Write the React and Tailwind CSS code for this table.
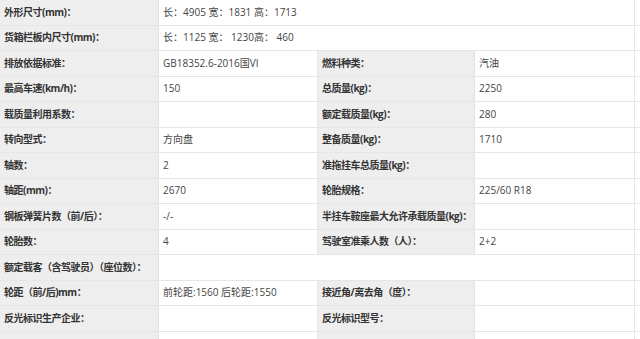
const rows = [
  { l: '外形尺寸(mm)：', v: '长：4905 宽：1831 高：1713', span: true },
  { l: '货箱栏板内尺寸(mm)：', v: '长：1125 宽： 1230高： 460', span: true },
  { l: '排放依据标准：', v: 'GB18352.6-2016国VI', l2: '燃料种类：', v2: '汽油' },
  { l: '最高车速(km/h)：', v: '150', l2: '总质量(kg)：', v2: '2250' },
  { l: '载质量利用系数：', v: '', l2: '额定载质量(kg)：', v2: '280' },
  { l: '转向型式：', v: '方向盘', l2: '整备质量(kg)：', v2: '1710' },
  { l: '轴数：', v: '2', l2: '准拖挂车总质量(kg)：', v2: '' },
  { l: '轴距(mm)：', v: '2670', l2: '轮胎规格：', v2: '225/60 R18' },
  { l: '钢板弹簧片数（前/后）：', v: '-/-', l2: '半挂车鞍座最大允许承载质量(kg)：', v2: '' },
  { l: '轮胎数：', v: '4', l2: '驾驶室准乘人数（人）：', v2: '2+2' },
  { l: '额定载客（含驾驶员）（座位数）：', v: '', span: true },
  { l: '轮距（前/后)mm：', v: '前轮距:1560 后轮距:1550', l2: '接近角/离去角（度）：', v2: '' },
  { l: '反光标识生产企业：', v: '', l2: '反光标识型号：', v2: '' },
  { l: '', v: '', l2: '', v2: '' },
];

function Label({ text, w }) {
  return (
    <div className={`${w} shrink-0 h-full flex items-center pl-1 bg-[#eeeeee] border-r border-[#e2e2e2] text-[10px] tracking-[-0.5px] font-bold text-[#333] whitespace-nowrap overflow-hidden`}>
      {text}
    </div>
  );
}

function Value({ text, w }) {
  return (
    <div className={`${w} shrink-0 h-full flex items-center pl-1 bg-white border-r border-[#e6e6e6] text-[10px] text-[#444] whitespace-nowrap overflow-hidden`}>
      {text}
    </div>
  );
}

export default function App() {
  return (
    <div
      className="w-[640px] h-[339px] overflow-hidden bg-white"
      style={{ fontFamily: '"Open Sans","Noto Sans CJK SC",sans-serif' }}
    >
      {rows.map((r, i) => (
        <div key={i} className="flex h-[25.5px] border-b border-[#e6e6e6]">
          <Label text={r.l} w="w-[159px]" />
          {r.span ? (
            <Value text={r.v} w="w-[476px]" />
          ) : (
            <>
              <Value text={r.v} w="w-[159px]" />
              <Label text={r.l2} w="w-[157px]" />
              <Value text={r.v2} w="w-[160px]" />
            </>
          )}
          <div className="flex-1 bg-white" />
        </div>
      ))}
    </div>
  );
}
